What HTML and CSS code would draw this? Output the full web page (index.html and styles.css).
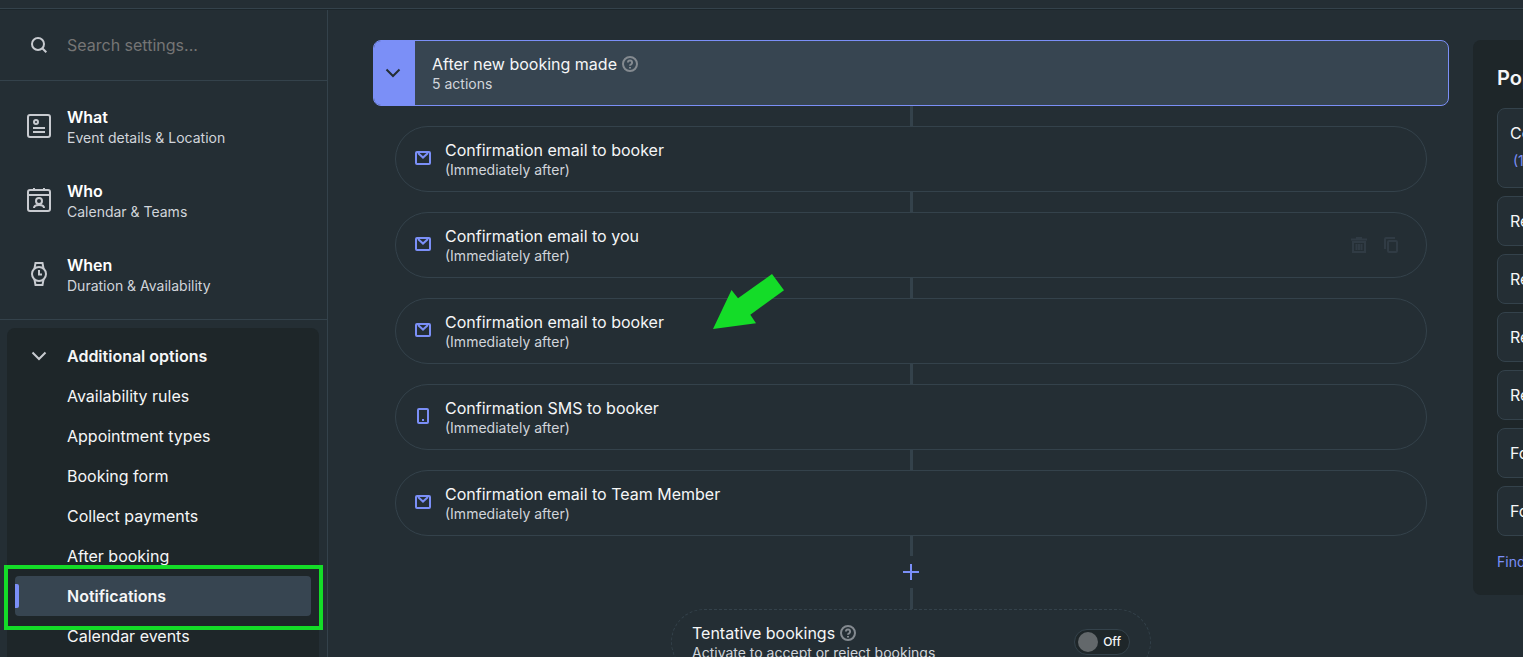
FILE: index.html
```html
<!DOCTYPE html>
<html lang="en">
<head>
    <meta charset="UTF-8">
    <meta name="viewport" content="width=device-width, initial-scale=1.0">
    <title>Notifications</title>
    <link rel="stylesheet" href="styles.css">
</head>
<body>
    <!-- shared icons -->
    <svg class="icon-defs" width="0" height="0" aria-hidden="true">
        <symbol id="icon-mail" viewBox="0 0 16 16">
            <rect x="1" y="2" width="14" height="12" rx="1" />
            <path d="M3 3l5 4.600L13 3" />
        </symbol>
        <symbol id="icon-phone" viewBox="0 0 16 16">
            <rect x="3" y="1" width="10" height="14" rx="1" />
            <path d="M7 12h2" />
        </symbol>
        <symbol id="icon-chevron" viewBox="0 0 16 16">
            <path d="M1.500 4.500L8 11l6.500-6.500" />
        </symbol>
        <symbol id="icon-help" viewBox="0 0 16 16">
            <circle cx="8" cy="8" r="7" />
            <path d="M5.900 6.500a2.100 2.100 0 1 1 3.200 1.800C8.400 8.700 8 9 8 9.700M8 11v1.500" />
        </symbol>
    </svg>

    <header class="topbar"></header>

    <div class="layout">
        <aside class="sidebar">
            <div class="search">
                <svg class="search-icon" viewBox="0 0 16 16"><circle cx="7" cy="7" r="6" /><path d="M11.300 11.300L15.300 15.300" /></svg>
                <input type="text" id="search" placeholder="Search settings..." aria-label="Search settings">
            </div>

            <nav class="main-nav">
                <a class="nav-item" href="#what">
                    <svg class="nav-icon" viewBox="0 0 24 24">
                        <rect x="1" y="1" width="22" height="22" rx="2" />
                        <circle cx="9" cy="8" r="2" />
                        <path d="M6 14h12M6 18h12" />
                    </svg>
                    <span class="nav-text"><strong>What</strong><span>Event details &amp; Location</span></span>
                </a>
                <a class="nav-item" href="#who">
                    <svg class="nav-icon" viewBox="0 0 24 24">
                        <rect x="1" y="2" width="22" height="21" rx="2" />
                        <path d="M1 7h22M7 0v3M17 0v3" />
                        <circle cx="12" cy="13" r="3" />
                        <path d="M7 20c0-2.500 1.500-3 5-3s5 .5 5 3" />
                    </svg>
                    <span class="nav-text"><strong>Who</strong><span>Calendar &amp; Teams</span></span>
                </a>
                <a class="nav-item" href="#when">
                    <svg class="nav-icon" viewBox="0 0 24 24">
                        <circle cx="12" cy="12" r="7" />
                        <path d="M7.500 6.500L8.500 1h7l1 5.500M7.500 17.500l1 5.500h7l1-5.500M12 8v4.500h3" />
                    </svg>
                    <span class="nav-text"><strong>When</strong><span>Duration &amp; Availability</span></span>
                </a>
            </nav>

            <div class="options">
                <button type="button" class="options-toggle" aria-expanded="true">
                    <svg class="chevron"><use href="#icon-chevron" /></svg>
                    Additional options
                </button>
                <a class="option" href="#availability">Availability rules</a>
                <a class="option" href="#types">Appointment types</a>
                <a class="option" href="#form">Booking form</a>
                <a class="option" href="#payments">Collect payments</a>
                <a class="option" href="#after">After booking</a>
                <a class="option active" href="#notifications">Notifications</a>
                <a class="option" href="#events">Calendar events</a>
            </div>
        </aside>

        <main class="content">
            <section class="flow">
                <div class="trigger">
                    <button type="button" class="trigger-toggle" aria-label="Collapse">
                        <svg class="chevron"><use href="#icon-chevron" /></svg>
                    </button>
                    <div class="card-text">
                        <div class="card-title">After new booking made <svg class="help"><use href="#icon-help" /></svg></div>
                        <div class="card-sub">5 actions</div>
                    </div>
                </div>

                <ul class="actions">
                    <li class="action">
                        <svg class="action-icon"><use href="#icon-mail" /></svg>
                        <div class="card-text">
                            <div class="card-title">Confirmation email to booker</div>
                            <div class="card-sub">(Immediately after)</div>
                        </div>
                    </li>
                    <li class="action">
                        <svg class="action-icon"><use href="#icon-mail" /></svg>
                        <div class="card-text">
                            <div class="card-title">Confirmation email to you</div>
                            <div class="card-sub">(Immediately after)</div>
                        </div>
                        <div class="action-tools">
                            <button type="button" aria-label="Delete">
                                <svg viewBox="0 0 16 16"><path d="M0 2.500h16M5 1h6M1 5h14M2 5v10h12V5M5.500 7v6M8 7v6M10.500 7v6" /></svg>
                            </button>
                            <button type="button" aria-label="Duplicate">
                                <svg viewBox="0 0 16 16"><rect x="5" y="4" width="9" height="11" rx="1" /><path d="M2 12V2a1 1 0 0 1 1-1h9" /></svg>
                            </button>
                        </div>
                    </li>
                    <li class="action">
                        <svg class="action-icon"><use href="#icon-mail" /></svg>
                        <div class="card-text">
                            <div class="card-title">Confirmation email to booker</div>
                            <div class="card-sub">(Immediately after)</div>
                        </div>
                        <svg class="arrow" viewBox="0 0 71 55"><path d="M0 55L18.500 16l6.500 8.300L59 0l12 16.300-33.700 24.400 5.700 8.600z" /></svg>
                    </li>
                    <li class="action">
                        <svg class="action-icon"><use href="#icon-phone" /></svg>
                        <div class="card-text">
                            <div class="card-title">Confirmation SMS to booker</div>
                            <div class="card-sub">(Immediately after)</div>
                        </div>
                    </li>
                    <li class="action">
                        <svg class="action-icon"><use href="#icon-mail" /></svg>
                        <div class="card-text">
                            <div class="card-title">Confirmation email to Team Member</div>
                            <div class="card-sub">(Immediately after)</div>
                        </div>
                    </li>
                </ul>

                <div class="connector"></div>
                <button type="button" class="add" aria-label="Add action">
                    <svg viewBox="0 0 16 16"><path d="M8 0v16M0 8h16" /></svg>
                </button>
                <div class="connector"></div>

                <div class="tentative">
                    <div class="card-text">
                        <div class="card-title">Tentative bookings <svg class="help"><use href="#icon-help" /></svg></div>
                        <div class="card-sub">Activate to accept or reject bookings</div>
                    </div>
                    <label class="switch">
                        <input type="checkbox" id="tentative">
                        <span>Off</span>
                    </label>
                </div>
            </section>

            <aside class="popular">
                <h2>Popular notifications</h2>
                <button type="button" class="popular-item">Confirmation<span class="count">(1)</span></button>
                <button type="button" class="popular-item">Reminder email</button>
                <button type="button" class="popular-item">Reminder SMS</button>
                <button type="button" class="popular-item">Reminder to you</button>
                <button type="button" class="popular-item">Reschedule email</button>
                <button type="button" class="popular-item">Follow-up email</button>
                <button type="button" class="popular-item">Follow-up SMS</button>
                <a class="popular-link" href="#more">Find out more</a>
            </aside>
        </main>
    </div>
</body>
</html>
```
FILE: styles.css
```css
* {
    box-sizing: border-box;
}
body {
    display: flex;
    flex-direction: column;
    height: 100vh;
    margin: 0;
    overflow: hidden;
    background-color: #242e34;
    color: #f5f6f7;
    font-family: Inter, "Liberation Sans", sans-serif;
    font-size: 16px;
    line-height: 20px;
}
a {
    color: inherit;
    text-decoration: none;
}
button {
    padding: 0;
    border: none;
    background: none;
    color: inherit;
    font: inherit;
    cursor: pointer;
}
svg {
    flex: none;
    fill: none;
    stroke: currentColor;
    stroke-width: 2;
}
.icon-defs {
    position: absolute;
}
.topbar {
    flex: none;
    height: 10px;
    border-bottom: 1px solid #1c262b;
    box-shadow: inset 0 -1px #34424b;
}
.layout {
    display: flex;
    flex: 1;
    min-height: 0;
}

/* sidebar */
.sidebar {
    flex: 0 0 328px;
    border-right: 1px solid #34424b;
    overflow: hidden;
}
.search {
    display: flex;
    align-items: center;
    gap: 20px;
    height: 71px;
    padding: 0 31px;
    border-bottom: 1px solid #34424b;
}
.search-icon {
    width: 16px;
    height: 16px;
    color: #c8cbd0;
}
.search input {
    flex: 1;
    min-width: 0;
    padding: 0;
    border: none;
    outline: none;
    background: none;
    color: inherit;
    font: inherit;
}
.search input::placeholder {
    color: #757575;
}
.main-nav {
    padding: 8px 0;
    border-bottom: 1px solid #34424b;
}
.nav-item {
    display: flex;
    align-items: center;
    gap: 16px;
    height: 74px;
    padding: 0 27px;
}
.nav-icon {
    width: 24px;
    height: 24px;
    color: #c8cbd0;
}
.nav-text {
    display: flex;
    flex-direction: column;
    gap: 1px;
    padding-top: 3px;
    color: #d1d5db;
    font-size: 14px;
}
.nav-text strong {
    color: #fff;
    font-size: 16px;
    font-weight: 600;
}
.options {
    margin: 8px 8px 0 7px;
    padding: 8px;
    border-radius: 8px;
    background-color: #1e2629;
}
.options-toggle,
.option {
    display: flex;
    align-items: center;
    width: 100%;
    height: 40px;
    padding-left: 52px;
}
.options-toggle {
    gap: 20px;
    padding-left: 16px;
    font-weight: 600;
}
.chevron {
    width: 16px;
    height: 16px;
}
.options-toggle .chevron {
    color: #c8cbd0;
}
.option.active {
    position: relative;
    border-radius: 4px;
    background-color: #374551;
    font-weight: 600;
}
.option.active::before {
    content: "";
    position: absolute;
    top: 8px;
    bottom: 8px;
    left: 0;
    width: 4px;
    border-radius: 0 2px 2px 0;
    background-color: #7b8ff7;
}
.option.active::after {
    content: "";
    position: absolute;
    inset: -11px -12px -14px -11px;
    border: 4px solid #14dc28;
}

/* notification flow */
.content {
    display: flex;
    flex: 1;
    align-items: flex-start;
    gap: 24px;
    min-width: 0;
    padding: 30px 0 0 45px;
}
.flow {
    display: flex;
    flex: 1;
    flex-direction: column;
    min-width: 0;
}
.trigger {
    display: flex;
    align-items: center;
    height: 66px;
    border: 1px solid #7b8ff7;
    border-radius: 8px;
    background-color: #374551;
    overflow: hidden;
}
.trigger-toggle {
    display: flex;
    align-items: center;
    justify-content: center;
    align-self: stretch;
    width: 41px;
    margin-right: 17px;
    padding-right: 3px;
    background-color: #7b8ff7;
    color: #242e34;
}
.card-text {
    padding-top: 2px;
}
.card-title {
    display: flex;
    align-items: center;
    gap: 5px;
}
.card-sub {
    color: #d1d5db;
    font-size: 14px;
}
.help {
    width: 16px;
    height: 16px;
    color: #848a90;
}
.actions {
    margin: 0;
    padding: 0 22px;
    list-style: none;
}
.action {
    position: relative;
    display: flex;
    align-items: center;
    gap: 14px;
    height: 66px;
    margin-top: 20px;
    padding: 0 27px 0 19px;
    border: 1px solid #34424b;
    border-radius: 33px;
}
.action::before {
    content: "";
    position: absolute;
    bottom: calc(100% + 1px);
    left: 50%;
    width: 3px;
    height: 20px;
    margin-left: -1px;
    background-color: #34424b;
}
.action-icon {
    width: 16px;
    height: 16px;
    margin-bottom: 2px;
    color: #7b8ff7;
}
.action-tools {
    display: flex;
    gap: 16px;
    margin-left: auto;
    color: #303b44;
}
.action-tools svg {
    display: block;
    width: 16px;
    height: 16px;
}
.arrow {
    position: absolute;
    top: -25px;
    left: 317px;
    width: 71px;
    height: 55px;
    fill: #14dc28;
    stroke: none;
}
.connector {
    align-self: center;
    width: 3px;
    height: 20px;
    background-color: #34424b;
}
.add + .connector {
    height: 21px;
}
.add {
    align-self: center;
    display: flex;
    align-items: center;
    justify-content: center;
    width: 32px;
    height: 32px;
    color: #7b8ff7;
}
.add svg {
    width: 16px;
    height: 16px;
}
.tentative {
    display: flex;
    align-items: center;
    align-self: center;
    justify-content: space-between;
    width: 480px;
    height: 66px;
    padding: 0 20px;
    border: 1px dashed #34424b;
    border-radius: 33px;
}
.switch {
    display: flex;
    align-items: center;
    gap: 5px;
    height: 26px;
    padding: 0 8px 0 3px;
    border: 1px solid #34424b;
    border-radius: 13px;
    background-color: #1e2629;
    font-size: 12px;
    font-weight: 500;
    cursor: pointer;
}
.switch input {
    appearance: none;
    width: 20px;
    height: 20px;
    margin: 0;
    border-radius: 50%;
    background-color: #63686b;
}

/* popular panel runs past the right edge of the window */
.popular {
    display: flex;
    flex: 0 0 312px;
    flex-direction: column;
    gap: 8px;
    margin-right: -262px;
    padding: 24px 24px 23px;
    border-radius: 8px;
    background-color: #1e2629;
}
.popular h2 {
    margin: 0 0 8px;
    font-size: 20px;
    font-weight: 600;
    line-height: 28px;
}
.popular-item {
    height: 50px;
    padding: 0 12px;
    border: 1px solid #34424b;
    border-radius: 8px;
    background-color: #242e34;
    text-align: left;
}
.popular-item:has(.count) {
    height: 80px;
    padding-bottom: 2px;
}
.count {
    display: block;
    margin-top: 8px;
    padding-left: 3px;
    color: #7b8ff7;
    font-size: 14px;
}
.popular-link {
    margin-top: 8px;
    color: #7b8ff7;
    font-size: 14px;
}
```
